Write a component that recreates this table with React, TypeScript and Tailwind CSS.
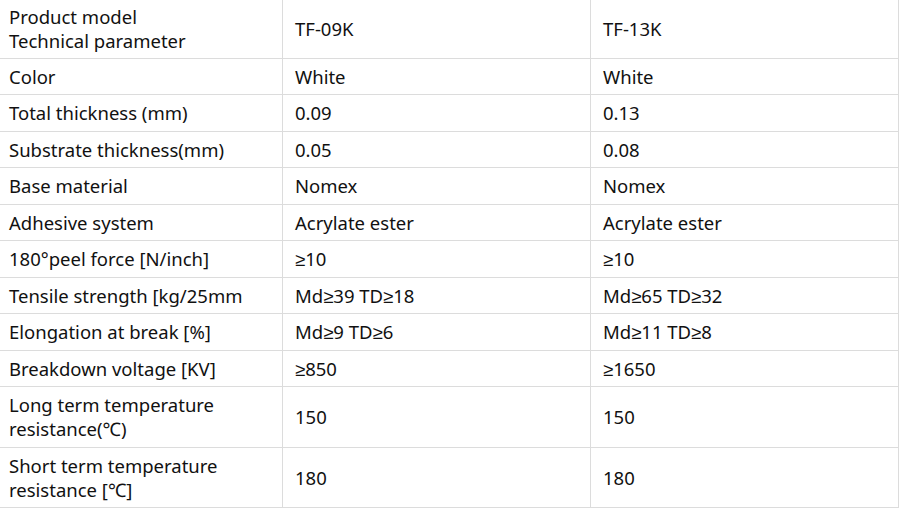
const rows: { label: string[]; a: string; b: string; h: string }[] = [
  { label: ['Product model', 'Technical parameter'], a: 'TF-09K', b: 'TF-13K', h: 'h-[59px]' },
  { label: ['Color'], a: 'White', b: 'White', h: 'h-[36px]' },
  { label: ['Total thickness (mm)'], a: '0.09', b: '0.13', h: 'h-[37px]' },
  { label: ['Substrate thickness(mm)'], a: '0.05', b: '0.08', h: 'h-[36px]' },
  { label: ['Base material'], a: 'Nomex', b: 'Nomex', h: 'h-[37px]' },
  { label: ['Adhesive system'], a: 'Acrylate ester', b: 'Acrylate ester', h: 'h-[36px]' },
  { label: ['180°peel force [N/inch]'], a: '≥10', b: '≥10', h: 'h-[37px]' },
  { label: ['Tensile strength [kg/25mm'], a: 'Md≥39 TD≥18', b: 'Md≥65 TD≥32', h: 'h-[36px]' },
  { label: ['Elongation at break [%]'], a: 'Md≥9 TD≥6', b: 'Md≥11 TD≥8', h: 'h-[37px]' },
  { label: ['Breakdown voltage [KV]'], a: '≥850', b: '≥1650', h: 'h-[36px]' },
  { label: ['Long term temperature', 'resistance(℃)'], a: '150', b: '150', h: 'h-[61px]' },
  { label: ['Short term temperature', 'resistance [℃]'], a: '180', b: '180', h: 'h-[60px]' },
];

export default function App() {
  return (
    <div className="w-[899px] bg-white font-['Noto_Sans','Liberation_Sans',sans-serif] text-[18.5px] leading-[24px] text-[#111]">
      <div className="grid grid-cols-[283px_308px_308px]">
        {rows.map((r, i) => (
          <div key={i} className="contents">
            <div className={`${r.h} flex flex-col justify-center border-r border-b border-[#dcdcdc] pl-[9px]`}>
              {r.label.map((l) => (
                <span key={l}>{l}</span>
              ))}
            </div>
            <div className={`${r.h} flex items-center border-r border-b border-[#dcdcdc] pl-[12px]`}>{r.a}</div>
            <div className={`${r.h} flex items-center border-r border-b border-[#dcdcdc] pl-[12px]`}>{r.b}</div>
          </div>
        ))}
      </div>
    </div>
  );
}
